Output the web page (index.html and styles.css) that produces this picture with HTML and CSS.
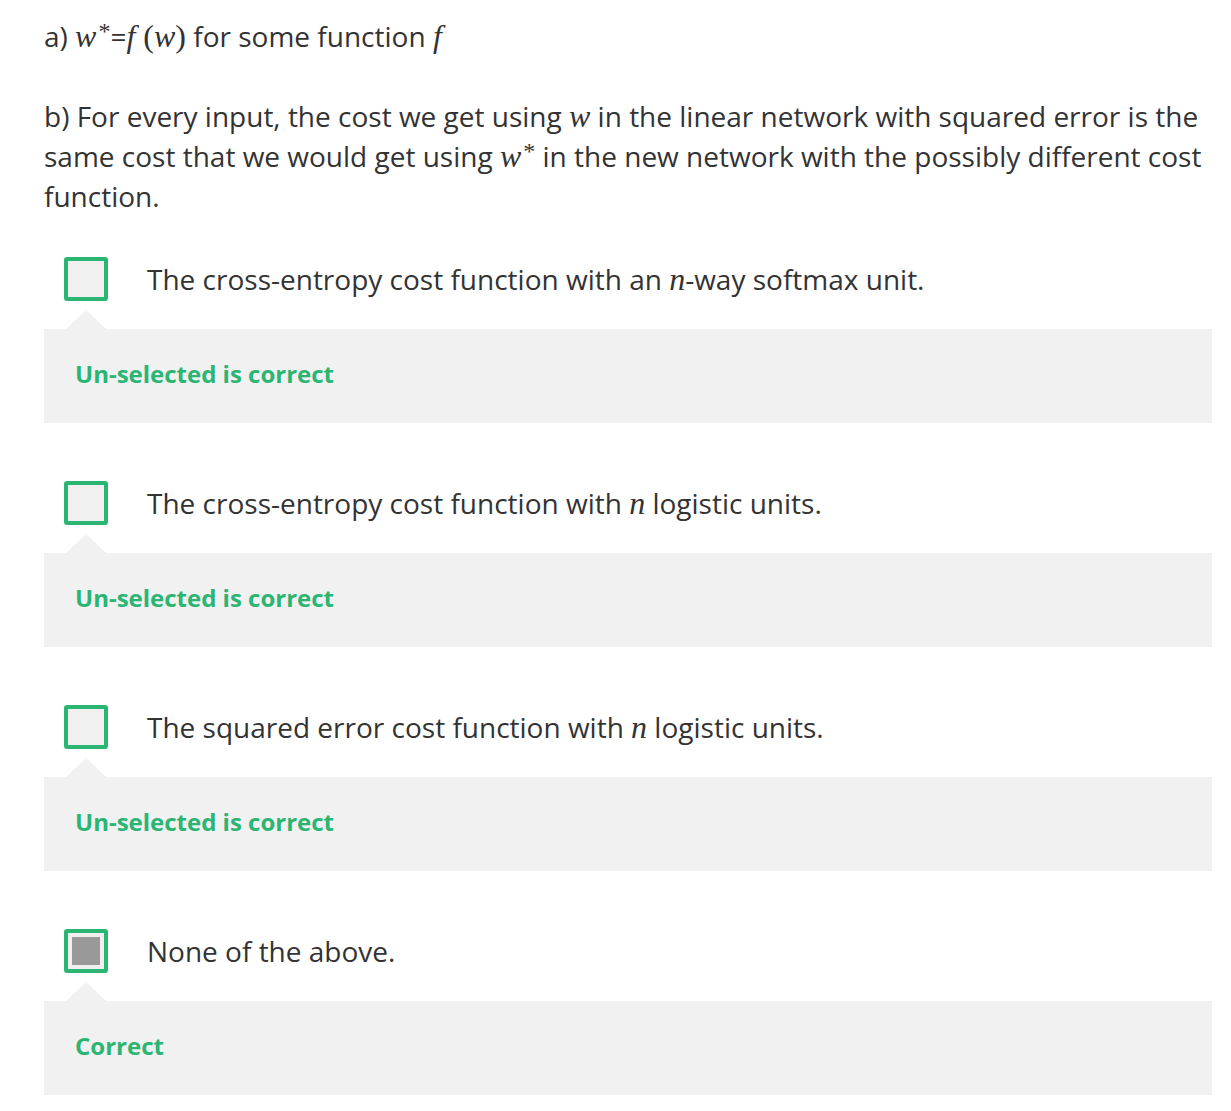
FILE: index.html
```html
<!DOCTYPE html>
<html>
<head>
<meta charset="utf-8">
<link rel="stylesheet" href="styles.css">
</head>
<body>
<div class="page">
  <p class="para">a) <span class="m">w</span><sup class="ms">*</sup>=<span class="m">f</span><span class="mr"> (</span><span class="m">w</span><span class="mr">)</span> for some function <span class="m">f</span></p>
  <p class="para">b) For every input, the cost we get using <span class="m">w</span> in the linear network with squared error is the same cost that we would get using <span class="m">w</span><sup class="ms">*</sup> in the new network with the possibly different cost function.</p>

  <div class="option">
    <div class="row"><span class="box"></span><span class="label">The cross-entropy cost function with an <span class="m">n</span>-way softmax unit.</span></div>
    <div class="feedback">Un-selected is correct</div>
  </div>
  <div class="option">
    <div class="row"><span class="box"></span><span class="label">The cross-entropy cost function with <span class="m">n</span> logistic units.</span></div>
    <div class="feedback">Un-selected is correct</div>
  </div>
  <div class="option">
    <div class="row"><span class="box"></span><span class="label">The squared error cost function with <span class="m">n</span> logistic units.</span></div>
    <div class="feedback">Un-selected is correct</div>
  </div>
  <div class="option">
    <div class="row"><span class="box checked"><span class="fill"></span></span><span class="label">None of the above.</span></div>
    <div class="feedback">Correct</div>
  </div>
</div>
</body>
</html>
```
FILE: styles.css
```css
html, body {
  margin: 0;
  padding: 0;
  background: #ffffff;
}
.page {
  padding: 16px 19px 0 44px;
  font-family: "Open Sans", "Noto Sans", sans-serif;
  font-size: 28px;
  line-height: 40px;
  color: #333333;
}
.para {
  margin: 0 0 40px 0;
}
.para:nth-child(2) {
  margin-bottom: 41px;
}
.m {
  font-family: "Liberation Serif", "DejaVu Serif", serif;
  font-style: italic;
  font-size: 32px;
}
.mr {
  font-family: "Liberation Serif", "DejaVu Serif", serif;
  font-size: 32px;
}
.ms {
  font-family: "Liberation Serif", "DejaVu Serif", serif;
  font-size: 24px;
  line-height: 0;
  vertical-align: 8px;
  padding-left: 2px;
}
.option {
  margin-bottom: 58px;
}
.row {
  display: flex;
  align-items: center;
  padding-left: 20px;
  gap: 39px;
}
.box {
  box-sizing: border-box;
  width: 44px;
  height: 44px;
  flex: none;
  border: 4px solid #2bb573;
  border-radius: 3px;
  background: #f0f0f0;
  display: flex;
  align-items: center;
  justify-content: center;
}
.fill {
  width: 28px;
  height: 28px;
  background: #999999;
}
.feedback {
  position: relative;
  margin-top: 28px;
  height: 94px;
  box-sizing: border-box;
  padding: 25px 31px;
  background: #f1f1f1;
  color: #2bb573;
  font-weight: 700;
  font-size: 24px;
  line-height: 40px;
}
.feedback::before {
  content: "";
  position: absolute;
  top: -19px;
  left: 22px;
  width: 0;
  height: 0;
  border-left: 20px solid transparent;
  border-right: 20px solid transparent;
  border-bottom: 19px solid #f1f1f1;
}
```
